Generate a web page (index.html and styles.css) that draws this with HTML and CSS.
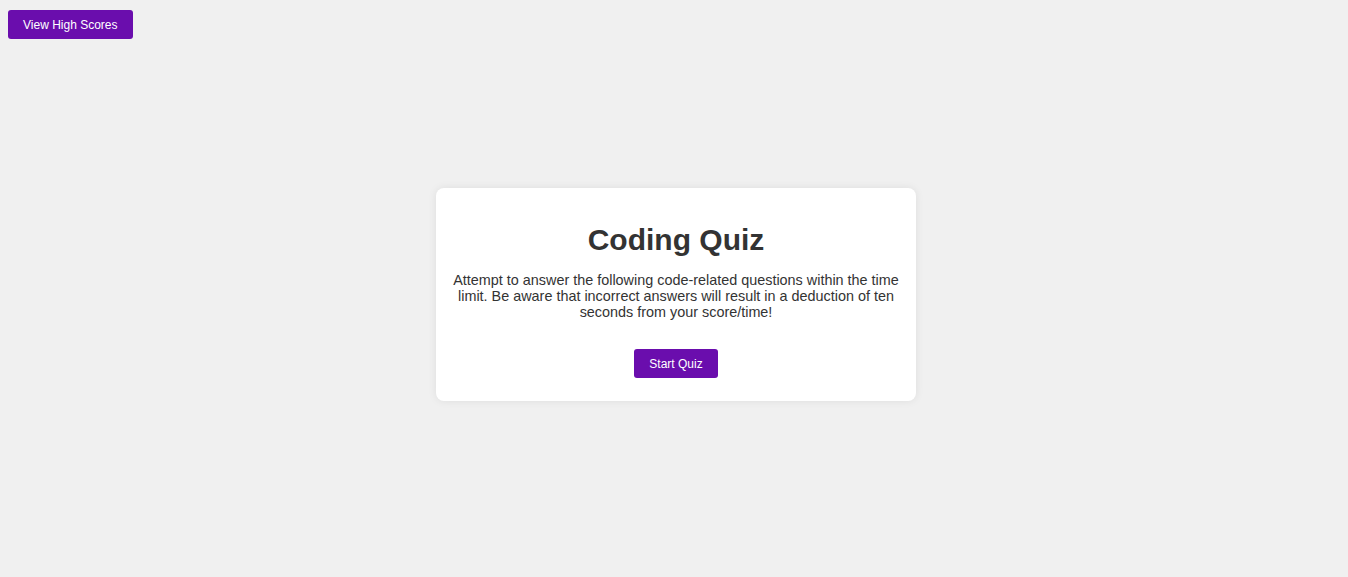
FILE: index.html
```html
<!DOCTYPE html>
<html lang="en">
<head>
<meta charset="utf-8">
<title>Coding Quiz</title>
<link rel="stylesheet" href="styles.css">
</head>
<body>
<header class="top">
  <button class="btn">View High Scores</button>
</header>
<main class="stage">
  <section class="card">
    <h1 class="title">Coding Quiz</h1>
    <p class="intro">Attempt to answer the following code-related questions within the time limit. Be aware that incorrect answers will result in a deduction of ten seconds from your score/time!</p>
    <button class="btn">Start Quiz</button>
  </section>
</main>
</body>
</html>
```
FILE: styles.css
```css
html, body {
  margin: 0;
  padding: 0;
}
body {
  background: #f0f0f0;
  font-family: "Liberation Sans", Arial, sans-serif;
  color: #333;
  min-height: 100vh;
}
.top {
  padding: 10px 8px 0;
  display: flex;
}
.btn {
  box-sizing: border-box;
  font-family: "Liberation Sans", Arial, sans-serif;
  font-size: 12px;
  line-height: 15px;
  height: 29px;
  padding: 2px 15px 0;
  background: #6a0dad;
  color: #fff;
  border: none;
  border-radius: 3px;
  cursor: pointer;
}
.stage {
  display: flex;
  justify-content: center;
  padding: 149px 0 0 4px;
}
.card {
  box-sizing: border-box;
  width: 480px;
  background: #fff;
  border-radius: 8px;
  box-shadow: 0 0 8px rgba(0, 0, 0, 0.08);
  padding: 20px 16px 23px;
  display: flex;
  flex-direction: column;
  align-items: center;
  text-align: center;
}
.title {
  font-size: 30px;
  font-weight: bold;
  line-height: 35px;
  margin: 14px 0 15px;
  color: #333;
}
.intro {
  font-size: 14.4px;
  line-height: 16px;
  margin: 0 0 29px;
}
```
